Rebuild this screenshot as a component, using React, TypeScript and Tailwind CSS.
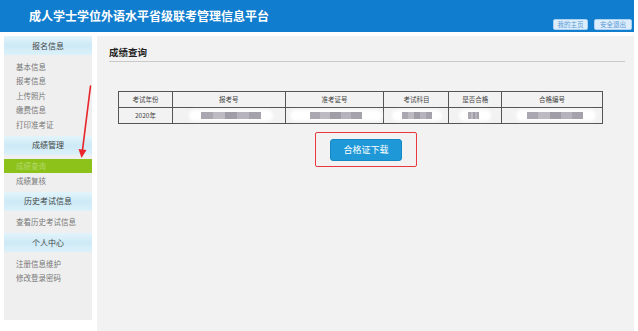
import React from "react";

const font = { fontFamily: '"Noto Sans CJK SC", "Noto Sans", sans-serif' };

const groups = [
  { title: "报名信息", items: ["基本信息", "报考信息", "上传照片", "缴费信息", "打印准考证"] },
  { title: "成绩管理", items: ["成绩查询", "成绩复核"] },
  { title: "历史考试信息", items: ["查看历史考试信息"] },
  { title: "个人中心", items: ["注册信息维护", "修改登录密码"] },
];

const cols = [
  { label: "考试年份", w: "w-[54px]" },
  { label: "报考号", w: "w-[113px]" },
  { label: "准考证号", w: "w-[99px]" },
  { label: "考试科目", w: "w-[65px]" },
  { label: "是否合格", w: "w-[53px]" },
  { label: "合格编号", w: "w-[100px]" },
];

// blurred (masked) cell value
function Masked({ band, gray }: { band: string; gray: string }) {
  return (
    <div className="relative h-full w-full">
      <div className={`absolute top-[2px] h-[11px] rounded-full bg-white blur-[1.5px] ${band}`} />
      <div className={`absolute top-[4px] h-[7px] flex blur-[0.6px] ${gray}`}>
        <div className="flex-1 bg-[#aaa7b0]" />
        <div className="flex-1 bg-[#bdbac1]" />
        <div className="flex-1 bg-[#a19da7]" />
        <div className="flex-1 bg-[#b7b3bc]" />
        <div className="flex-1 bg-[#a6a2ac]" />
      </div>
    </div>
  );
}

export default function App() {
  return (
    <div className="relative w-[638px] h-[331px] bg-white overflow-hidden" style={font}>
      {/* header */}
      <div className="w-[634px] h-[32px] bg-[#117dce] flex items-center justify-between">
        <h1 className="ml-[29px] text-white font-bold text-[12px] leading-none mt-[-1px]">
          成人学士学位外语水平省级联考管理信息平台
        </h1>
        <div className="flex gap-[6px] mr-[2px] mt-[16px]">
          <span className="h-[11px] w-[35px] flex items-center justify-center rounded-[2px] border border-[#a9d0f0] bg-[#dcedfb] text-[#5a9ad6] text-[6.5px] leading-none">
            我的主页
          </span>
          <span className="h-[11px] w-[38px] flex items-center justify-center rounded-[2px] border border-[#a9d0f0] bg-[#dcedfb] text-[#5a9ad6] text-[6.5px] leading-none">
            安全退出
          </span>
        </div>
      </div>

      <div className="flex mt-[4px]">
        {/* sidebar */}
        <div className="ml-[4px] w-[88px] h-[284px] bg-[#efefef]">
          {groups.map((g, gi) => (
            <div key={gi}>
              <div className="h-[19px] flex items-center justify-center text-[8px] text-[#444] bg-gradient-to-b from-[#e3f4fb] via-[#cdeaf6] to-[#dcf1fa]">
                {g.title}
              </div>
              <div className="py-[4px]">
                {g.items.map((it) => (
                  <div
                    key={it}
                    className={`h-[14.5px] flex items-center pl-[12px] text-[7.5px] ${
                      it === "成绩查询" ? "bg-[#8cc21a] text-[#b4d86a]" : "text-[#777]"
                    }`}
                  >
                    {it}
                  </div>
                ))}
              </div>
            </div>
          ))}
        </div>

        {/* main */}
        <div className="ml-[5px] w-[537px] h-[295px] bg-[#f2f2f2] pl-[12px] pr-[9px]">
          <div className="pt-[9px] h-[26px] border-b border-[#c9c9c9]">
            <h2 className="text-[9.5px] font-bold text-[#222] leading-[14px]">成绩查询</h2>
          </div>

          <div className="ml-[9px] mt-[29px] w-[485px] border border-[#555]">
            <div className="flex h-[16px] border-b border-[#555]">
              {cols.map((c, i) => (
                <div
                  key={c.label}
                  className={`${c.w} flex items-center justify-center text-[6.5px] text-[#444] ${
                    i < cols.length - 1 ? "border-r border-[#555]" : ""
                  }`}
                >
                  {c.label}
                </div>
              ))}
            </div>
            <div className="flex h-[15px]">
              <div className="w-[54px] flex items-center justify-center text-[6.5px] text-[#444] border-r border-[#555]">
                2020年
              </div>
              <div className="w-[113px] border-r border-[#555]">
                <Masked band="left-[16px] w-[84px]" gray="left-[28px] w-[60px]" />
              </div>
              <div className="w-[99px] border-r border-[#555]">
                <Masked band="left-[4px] w-[92px]" gray="left-[24px] w-[52px]" />
              </div>
              <div className="w-[65px] border-r border-[#555]">
                <Masked band="left-[8px] w-[50px]" gray="left-[18px] w-[30px]" />
              </div>
              <div className="w-[53px] border-r border-[#555]">
                <Masked band="left-[10px] w-[32px]" gray="left-[19px] w-[11px]" />
              </div>
              <div className="w-[100px]">
                <Masked band="left-[14px] w-[80px]" gray="left-[25px] w-[56px]" />
              </div>
            </div>
          </div>

          <div className="flex justify-center mt-[8px] pr-[2px]">
            <div className="w-[102px] h-[35px] border-[1.5px] border-[#e8383d] rounded-[2px] flex items-center justify-center">
              <button className="w-[72px] h-[22px] rounded-[3px] bg-[#1e98d7] border border-[#1688c4] text-white text-[9px] leading-none">
                合格证下载
              </button>
            </div>
          </div>
        </div>
      </div>

      {/* red annotation arrow */}
      <svg className="absolute left-0 top-0 pointer-events-none" width="638" height="331">
        <line x1="90.5" y1="86" x2="82.5" y2="150" stroke="#e8262b" strokeWidth="1.6" strokeLinecap="round" />
        <polygon points="78.5,149 86.5,150 81.5,158" fill="#e8262b" />
      </svg>
    </div>
  );
}
